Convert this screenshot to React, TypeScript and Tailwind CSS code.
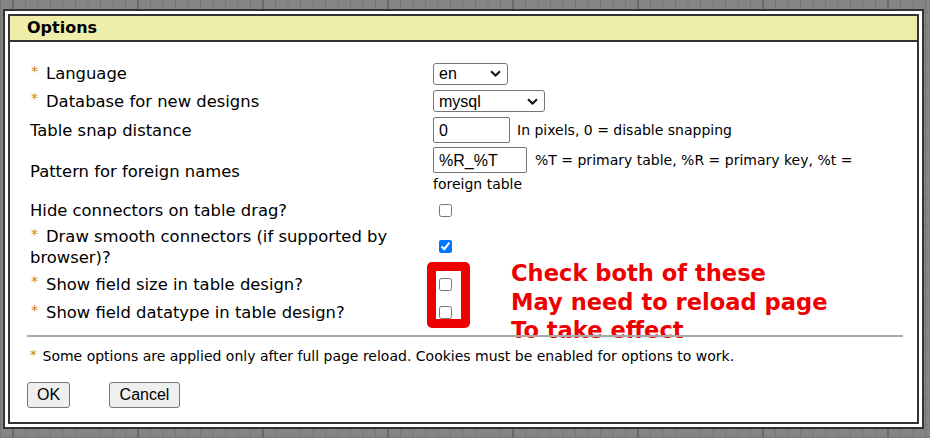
import React from "react";

const Star = () => (
  <span className="relative top-[-3px] mr-[8px] ml-[1px] text-[14px] leading-none text-[#d08000]">*</span>
);

const Chevron = () => (
  <svg width="11" height="7" viewBox="0 0 11 7" className="shrink-0">
    <path d="M1 1.2 L5.5 5.5 L10 1.2" fill="none" stroke="#111" strokeWidth="2" />
  </svg>
);

function FakeSelect({ value, width }: { value: string; width: string }) {
  return (
    <div
      className={`${width} flex h-[22px] items-center justify-between rounded-[3px] border border-[#767676] bg-white pl-[5px] pr-[6px] font-['Liberation_Sans',Arial,sans-serif] text-[16px] text-black`}
    >
      <span>{value}</span>
      <Chevron />
    </div>
  );
}

function TextBox({ value, width }: { value: string; width: string }) {
  return (
    <div
      className={`${width} flex h-[26px] shrink-0 items-center rounded-[2px] border border-[#767676] bg-white px-[5px] font-['Liberation_Sans',Arial,sans-serif] text-[16px] text-black`}
    >
      {value}
    </div>
  );
}

function Check({ checked = false }: { checked?: boolean }) {
  return (
    <input
      type="checkbox"
      defaultChecked={checked}
      className="ml-[6px] h-[13px] w-[13px]"
    />
  );
}

export default function App() {
  return (
    <div className="h-[438px] w-[930px] overflow-hidden bg-[#858585] bg-[linear-gradient(90deg,#6a6a6a_2px,transparent_2px),linear-gradient(90deg,#767676_1px,transparent_1px),linear-gradient(0deg,#767676_1px,transparent_1px)] bg-[size:125px_100%,12.5px_100%,100%_12.5px] bg-[position:12px_0,0_0,0_0] pl-[3px] pt-[9px] font-['DejaVu_Sans',Verdana,sans-serif] text-black">
      <div className="h-[420px] w-[921px] border-2 border-[#333] bg-white p-[3px]">
        <div className="relative h-full border-2 border-[#333]">
          <div className="h-[26px] border-b-2 border-[#333] bg-[#eeeeaa] pl-[17px] text-[16px] font-bold leading-[24px]">
            Options
          </div>

          <div className="pl-[17px] pr-[14px] pt-[18px]">
            <div className="grid grid-cols-[403px_1fr] pl-[3px] text-[16.4px] leading-[21px]">
              <div className="flex h-[27px] items-center">
                <Star />Language
              </div>
              <div className="flex h-[27px] items-center">
                <FakeSelect value="en" width="w-[75px]" />
              </div>

              <div className="flex h-[28px] items-center">
                <Star />Database for new designs
              </div>
              <div className="flex h-[28px] items-center">
                <FakeSelect value="mysql" width="w-[112px]" />
              </div>

              <div className="flex h-[30px] items-center">Table snap distance</div>
              <div className="flex h-[30px] items-center gap-[7px] text-[14px]">
                <TextBox value="0" width="w-[77px]" />
                <span>In pixels, 0 = disable snapping</span>
              </div>

              <div className="flex h-[52px] items-center">Pattern for foreign names</div>
              <div className="h-[52px] pt-[2px] text-[14px] leading-[17px]">
                <div className="flex items-center gap-[8px]">
                  <TextBox value="%R_%T" width="w-[94px]" />
                  <span>%T = primary table, %R = primary key, %t =</span>
                </div>
                <div className="mt-[3px]">foreign table</div>
              </div>

              <div className="flex h-[26px] items-center">Hide connectors on table drag?</div>
              <div className="flex h-[26px] items-center">
                <Check />
              </div>

              <div className="flex h-[47px] items-center">
                <div>
                  <Star />Draw smooth connectors (if supported by
                  <br />
                  browser)?
                </div>
              </div>
              <div className="flex h-[47px] items-center">
                <Check checked />
              </div>

              <div className="flex h-[28px] items-center">
                <Star />Show field size in table design?
              </div>
              <div className="flex h-[28px] items-center">
                <Check />
              </div>

              <div className="flex h-[29px] items-center">
                <Star />Show field datatype in table design?
              </div>
              <div className="flex h-[29px] items-center">
                <Check />
              </div>
            </div>

            <div className="relative z-10 mt-[8px] h-[2px] bg-[#a8a8a8]" />

            <div className="mt-[10px] pl-[3px] text-[14px] leading-[18px]">
              <span className="relative top-[-2px] mr-[6px] text-[13px] text-[#d08000]">*</span>
              Some options are applied only after full page reload. Cookies must be enabled for options to work.
            </div>

            <div className="mt-[16px] flex gap-[39px] font-['Liberation_Sans',Arial,sans-serif] text-[16px]">
              <button className="h-[26px] w-[43px] rounded-[3px] border border-[#767676] bg-[#efefef]">OK</button>
              <button className="h-[26px] w-[71px] rounded-[3px] border border-[#767676] bg-[#efefef]">Cancel</button>
            </div>
          </div>

          <div className="absolute left-[417px] top-[246px] h-[66px] w-[43px] rounded-[5px] border-[9px] border-[#ee0000]" />
          <div className="absolute left-[501px] top-[243px] text-[22.6px] font-bold leading-[28.5px] text-[#ee0000]">
            Check both of these
            <br />
            May need to reload page
            <br />
            To take effect
          </div>
        </div>
      </div>
    </div>
  );
}
